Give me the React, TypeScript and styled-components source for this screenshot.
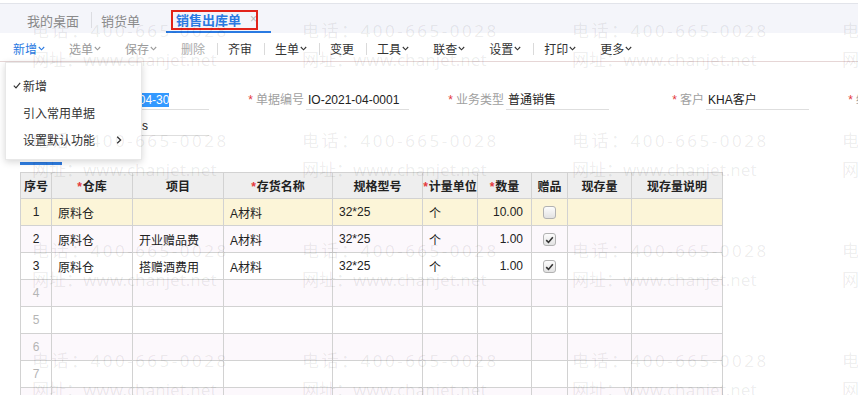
import React from "react";
import styled, { createGlobalStyle } from "styled-components";

const GlobalStyle = createGlobalStyle`
  html, body {
    margin: 0;
    padding: 0;
    background: #fff;
  }
  body {
    font-family: "Liberation Sans", "Noto Sans CJK SC", sans-serif;
    font-size: 12px;
    color: #333;
    overflow: hidden;
  }
`;

const Page = styled.div`
  position: relative;
  width: 858px;
  height: 395px;
  overflow: hidden;
  background: #fff;
`;

/* ---------- tab bar ---------- */

const TabBar = styled.div`
  margin-top: 3px;
  border-top: 1px solid #e2e4ea;
  height: 29px;
  background: #f4f5fa;
  display: flex;
  align-items: stretch;
  padding-left: 14px;
`;

const Tab = styled.div<{ $active?: boolean }>`
  position: relative;
  display: flex;
  align-items: center;
  box-sizing: border-box;
  padding: ${({ $active }) => ($active ? "3px 14px 0 10px" : "4px 9px 0 9px")};
  margin-left: ${({ $active }) => ($active ? "17px" : "0")};
  font-size: 13px;
  font-weight: ${({ $active }) => ($active ? "bold" : "normal")};
  color: ${({ $active }) => ($active ? "#2a7ae2" : "#8a8a8a")};
  border-bottom: ${({ $active }) => ($active ? "2px solid #2a7ae2" : "none")};
  &:first-child {
    padding-left: 13px;
    padding-right: 12px;
  }
`;

const TabSep = styled.span`
  align-self: center;
  width: 1px;
  height: 16px;
  margin-top: 3px;
  background: #dcdde2;
`;

const Close = styled.span`
  margin-left: 9px;
  font-weight: normal;
  font-size: 12px;
  color: #b8b8b8;
`;

const Highlight = styled.div`
  position: absolute;
  left: 5px;
  top: 6px;
  width: 87px;
  height: 20px;
  box-sizing: border-box;
  border: 2px solid #e2231a;
`;

/* ---------- toolbar ---------- */

const Toolbar = styled.div`
  height: 28px;
  box-sizing: border-box;
  padding: 3px 0 0 13px;
  display: flex;
  align-items: center;
`;

const ToolItem = styled.span<{ $tone: "primary" | "muted" | "off" | "normal"; $last?: boolean }>`
  display: inline-flex;
  align-items: center;
  margin-right: ${({ $last }) => ($last ? "0" : "24px")};
  color: ${({ $tone }) =>
    $tone === "primary" ? "#2a7ae2" : $tone === "muted" ? "#9a9a9a" : $tone === "off" ? "#ababab" : "#333"};
  white-space: nowrap;
`;

const ToolSep = styled.span`
  width: 1px;
  height: 12px;
  background: #dadada;
  margin: 0 10px 0 12px;
`;

const Chevron = () => (
  <svg width="7" height="5" viewBox="0 0 7 5" style={{ marginLeft: 1 }}>
    <path d="M0.8 1 L3.5 3.8 L6.2 1" fill="none" stroke="currentColor" strokeWidth="1.1" />
  </svg>
);

/* ---------- form ---------- */

const Content = styled.div`
  border-top: 1px solid #e6d6d6;
`;

const Form = styled.div`
  padding: 26px 0 0 7px;
  display: grid;
  grid-template-columns: repeat(5, 200px);
  row-gap: 4px;
`;

const Field = styled.div`
  display: grid;
  grid-template-columns: 97px 103px;
  column-gap: 2px;
`;

const Label = styled.div`
  text-align: right;
  color: #a0a0a0;
  line-height: 18px;
  padding-top: 3px;
  white-space: nowrap;
`;

const Star = styled.span<{ $tight?: boolean }>`
  color: #e4393c;
  margin-right: ${({ $tight }) => ($tight ? "1px" : "3px")};
`;

const Value = styled.div`
  border-bottom: 1px solid #dedede;
  padding: 3px 0 0 2px;
  line-height: 18px;
  color: #222;
  white-space: nowrap;
  overflow: hidden;
`;

const Selected = styled.span`
  background: #3399ff;
  color: #fff;
`;

/* ---------- detail section ---------- */

const SectionTabs = styled.div`
  margin: 4px 0 0 20px;
  display: flex;
`;

const SectionTab = styled.div`
  width: 42px;
  height: 22px;
  line-height: 22px;
  text-align: center;
  color: #2f7de1;
  border-bottom: 3px solid #2f7de1;
`;

const Grid = styled.table`
  margin: 7px 0 0 20px;
  border-collapse: collapse;
  table-layout: fixed;
  width: 702px;
  font-size: 12px;
  th, td {
    border: 1px solid #d2d2d2;
    padding: 0 6px;
    white-space: nowrap;
    overflow: hidden;
  }
  th {
    height: 25px;
    background: #eeeeee;
    font-weight: bold;
    color: #222;
    text-align: center;
    padding: 0;
  }
`;

const Row = styled.tr<{ $selected?: boolean; $even?: boolean }>`
  background: ${({ $selected, $even }) => ($selected ? "#fcf5d8" : $even ? "#fcf8fc" : "#fff")};
  td {
    height: 26px;
    color: #222;
  }
`;

const NumCell = styled.td<{ $dim?: boolean }>`
  text-align: center;
  color: ${({ $dim }) => ($dim ? "#b5b5b5" : "#222")} !important;
`;

const RightCell = styled.td`
  text-align: right;
  padding-right: 8px !important;
`;

const CenterCell = styled.td`
  text-align: center;
  padding: 0 !important;
`;

const Box = styled.span`
  display: inline-flex;
  align-items: center;
  justify-content: center;
  width: 13px;
  height: 13px;
  box-sizing: border-box;
  border: 1px solid #b2b2b2;
  border-radius: 3px;
  background: linear-gradient(#fdfdfd, #e2e2e2);
  vertical-align: middle;
`;

const Checkbox = ({ checked }: { checked?: boolean }) => (
  <Box>
    {checked && (
      <svg width="9" height="8" viewBox="0 0 9 8">
        <path d="M1.2 4.2 L3.5 6.4 L7.8 1.2" fill="none" stroke="#333" strokeWidth="1.6" />
      </svg>
    )}
  </Box>
);

/* ---------- dropdown menu ---------- */

const Menu = styled.div`
  position: absolute;
  left: 5px;
  top: 62px;
  width: 137px;
  box-sizing: border-box;
  padding: 9px 0 6px;
  background: #fff;
  border: 1px solid #e8e8e8;
  box-shadow: 0 2px 7px rgba(0, 0, 0, 0.16);
  z-index: 5;
`;

const MenuItem = styled.div`
  height: 27px;
  display: flex;
  align-items: center;
  padding: 0 19px 0 7px;
  color: #333;
`;

const MenuIcon = styled.span`
  width: 10px;
  display: inline-flex;
  align-items: center;
`;

const MenuText = styled.span`
  flex: 1;
`;

/* ---------- watermark ---------- */

const Watermark = styled.div`
  position: absolute;
  inset: 0;
  pointer-events: none;
  z-index: 10;
  padding: 20px 0 0 32px;
  display: grid;
  grid-template-columns: repeat(4, 270px);
  grid-auto-rows: 110px;
`;

const MarkLine = styled.div<{ $spacing: number }>`
  font-family: "Noto Sans", "Noto Sans CJK SC", sans-serif;
  font-size: 17px;
  line-height: 22px;
  height: 22px;
  letter-spacing: ${({ $spacing }) => $spacing}px;
  color: rgba(0, 0, 0, 0.08);
  white-space: nowrap;
  & + & {
    margin-top: 7px;
  }
`;

type Tool = { label: string; tone: "primary" | "muted" | "off" | "normal"; menu?: boolean; sep?: boolean };

const tools: Tool[] = [
  { label: "新增", tone: "primary", menu: true },
  { label: "选单", tone: "muted", menu: true },
  { label: "保存", tone: "muted", menu: true },
  { label: "删除", tone: "off", sep: true },
  { label: "齐审", tone: "normal", sep: true },
  { label: "生单", tone: "normal", menu: true, sep: true },
  { label: "变更", tone: "normal", sep: true },
  { label: "工具", tone: "normal", menu: true },
  { label: "联查", tone: "normal", menu: true },
  { label: "设置", tone: "normal", menu: true, sep: true },
  { label: "打印", tone: "normal", menu: true },
  { label: "更多", tone: "normal", menu: true },
];

type Line = { no: number; store?: string; project?: string; goods?: string; spec?: string; unit?: string; qty?: string; gift?: boolean };

const lines: Line[] = [
  { no: 1, store: "原料仓", project: "", goods: "A材料", spec: "32*25", unit: "个", qty: "10.00", gift: false },
  { no: 2, store: "原料仓", project: "开业赠品费", goods: "A材料", spec: "32*25", unit: "个", qty: "1.00", gift: true },
  { no: 3, store: "原料仓", project: "搭赠酒费用", goods: "A材料", spec: "32*25", unit: "个", qty: "1.00", gift: true },
  { no: 4 },
  { no: 5 },
  { no: 6 },
  { no: 7 },
  { no: 8 },
];

const widths = [31, 81, 91, 109, 90, 55, 54, 36, 64, 91];

export default function App() {
  return (
    <Page>
      <GlobalStyle />
      <TabBar>
        <Tab>我的桌面</Tab>
        <TabSep />
        <Tab>销货单</Tab>
        <Tab $active>
          销售出库单
          <Close>×</Close>
          <Highlight />
        </Tab>
      </TabBar>

      <Toolbar>
        {tools.map((t, i) => (
          <React.Fragment key={t.label}>
            <ToolItem $tone={t.tone} $last={t.sep || i === tools.length - 1}>
              {t.label}
              {t.menu && <Chevron />}
            </ToolItem>
            {t.sep && <ToolSep />}
          </React.Fragment>
        ))}
      </Toolbar>

      <Content>
        <Form>
          <Field>
            <Label><Star>*</Star>单据日期</Label>
            <Value>2021-<Selected>04-30</Selected></Value>
          </Field>
          <Field>
            <Label><Star>*</Star>单据编号</Label>
            <Value>IO-2021-04-0001</Value>
          </Field>
          <Field>
            <Label><Star>*</Star>业务类型</Label>
            <Value>普通销售</Value>
          </Field>
          <Field>
            <Label><Star>*</Star>客户</Label>
            <Value>KHA客户</Value>
          </Field>
          <Field>
            <Label><Star>*</Star>结算方式</Label>
            <Value>现结</Value>
          </Field>
          <Field>
            <Label>业务员</Label>
            <Value>Admins</Value>
          </Field>
        </Form>

        <SectionTabs>
          <SectionTab>明细</SectionTab>
        </SectionTabs>

        <Grid>
          <colgroup>
            {widths.map((w, i) => (
              <col key={i} style={{ width: w }} />
            ))}
          </colgroup>
          <thead>
            <tr>
              <th>序号</th>
              <th><Star $tight>*</Star>仓库</th>
              <th>项目</th>
              <th><Star $tight>*</Star>存货名称</th>
              <th>规格型号</th>
              <th><Star $tight>*</Star>计量单位</th>
              <th><Star $tight>*</Star>数量</th>
              <th>赠品</th>
              <th>现存量</th>
              <th>现存量说明</th>
            </tr>
          </thead>
          <tbody>
            {lines.map((l) => (
              <Row key={l.no} $selected={l.no === 1} $even={l.no % 2 === 0}>
                <NumCell $dim={!l.store}>{l.no}</NumCell>
                <td>{l.store}</td>
                <td>{l.project}</td>
                <td>{l.goods}</td>
                <td>{l.spec}</td>
                <td>{l.unit}</td>
                <RightCell>{l.qty}</RightCell>
                <CenterCell>{l.store && <Checkbox checked={l.gift} />}</CenterCell>
                <td />
                <td />
              </Row>
            ))}
          </tbody>
        </Grid>
      </Content>

      <Menu>
        <MenuItem>
          <MenuIcon>
            <svg width="8" height="7" viewBox="0 0 8 7">
              <path d="M0.8 3.6 L3 5.8 L7.2 0.8" fill="none" stroke="#333" strokeWidth="1.2" />
            </svg>
          </MenuIcon>
          <MenuText>新增</MenuText>
        </MenuItem>
        <MenuItem>
          <MenuIcon />
          <MenuText>引入常用单据</MenuText>
        </MenuItem>
        <MenuItem>
          <MenuIcon />
          <MenuText>设置默认功能</MenuText>
          <svg width="6" height="8" viewBox="0 0 6 8">
            <path d="M1.2 0.8 L4.6 4 L1.2 7.2" fill="none" stroke="#333" strokeWidth="1.3" />
          </svg>
        </MenuItem>
      </Menu>

      <Watermark>
        {Array.from({ length: 16 }).map((_, i) => (
          <div key={i}>
            <MarkLine $spacing={2.5}>电话：400-665-0028</MarkLine>
            <MarkLine $spacing={0}>网址：www.chanjet.net</MarkLine>
          </div>
        ))}
      </Watermark>
    </Page>
  );
}
